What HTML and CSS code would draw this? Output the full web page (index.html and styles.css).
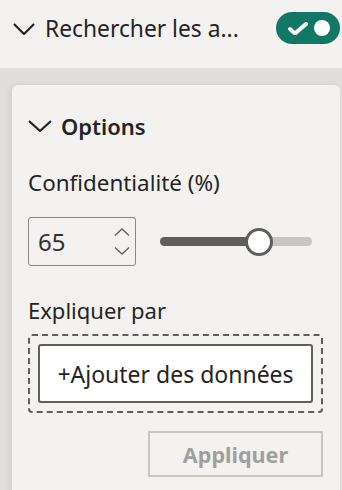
FILE: index.html
```html
<!DOCTYPE html>
<html lang="fr">
<head>
<meta charset="utf-8">
<link rel="stylesheet" href="styles.css">
</head>
<body>
<div class="header">
  <svg class="chev" viewBox="0 0 22 12" width="22" height="12"><path d="M1 1 L11 11 L21 1" fill="none" stroke="#252423" stroke-width="2.2"/></svg>
  <span class="title">Rechercher les a...</span>
  <div class="toggle">
    <svg class="check" viewBox="0 0 20 13" width="20" height="13"><path d="M2 7 L7 11.5 L18 2" fill="none" stroke="#fff" stroke-width="4" stroke-linecap="round" stroke-linejoin="round"/></svg>
    <span class="knob"></span>
  </div>
</div>
<div class="pane">
  <div class="card">
    <div class="section-head">
      <svg class="chev" viewBox="0 0 24 12" width="24" height="12"><path d="M1 1 L12 11 L23 1" fill="none" stroke="#252423" stroke-width="2.2"/></svg>
      <span>Options</span>
    </div>
    <div class="label">Confidentialité (%)</div>
    <div class="conf-row">
      <div class="spin">
        <span class="val">65</span>
        <div class="arrows">
          <svg viewBox="0 0 16 8" width="16" height="8"><path d="M1 7.5 L8 1 L15 7.5" fill="none" stroke="#605e5c" stroke-width="1.3"/></svg>
          <svg viewBox="0 0 16 8" width="16" height="8"><path d="M1 0.5 L8 7 L15 0.5" fill="none" stroke="#605e5c" stroke-width="1.3"/></svg>
        </div>
      </div>
      <div class="slider">
        <div class="track"><div class="fill" style="width:65%"></div></div>
        <div class="thumb" style="left:65%"></div>
      </div>
    </div>
    <div class="label label-explain">Expliquer par</div>
    <div class="drop">
      <button class="add">+Ajouter des données</button>
    </div>
    <div class="actions">
      <button class="apply" disabled>Appliquer</button>
    </div>
  </div>
</div>
</body>
</html>
```
FILE: styles.css
```css
html, body {
  margin: 0;
  padding: 0;
  height: 100%;
  overflow: hidden;
}
body {
  background: #e1dfdd;
  font-family: "Noto Sans", "Open Sans", sans-serif;
  color: #252423;
}
.header {
  background: #f3f2f1;
  height: 68px;
  box-sizing: border-box;
  padding: 12px 2px 0 13px;
  display: flex;
  align-items: flex-start;
}
.header .chev {
  margin-top: 11px;
  flex: none;
}
.title {
  margin-left: 10px;
  font-size: 22.8px;
  line-height: 34px;
  flex: 1;
  white-space: nowrap;
}
.toggle {
  width: 64px;
  height: 32px;
  border-radius: 16px;
  background: #117865;
  display: flex;
  align-items: center;
  padding: 0 10px 0 12px;
  box-sizing: border-box;
  justify-content: space-between;
  flex: none;
}
.check {
  display: block;
}
.knob {
  width: 16px;
  height: 16px;
  border-radius: 50%;
  background: #fff;
}
.pane {
  padding: 17px 2px 0 12px;
}
.card {
  background: #f3f2f1;
  border-radius: 6px;
  box-shadow: -2px 0 6px rgba(0,0,0,0.08);
  padding: 25px 17px 40px 16px;
  min-height: 420px;
}
.section-head {
  display: flex;
  align-items: center;
  height: 32px;
  font-size: 22px;
  font-weight: 600;
}
.section-head .chev {
  margin-right: 9px;
}
.label {
  margin-top: 26px;
  font-size: 22.4px;
  line-height: 30px;
}
.conf-row {
  margin-top: 19px;
  display: flex;
  align-items: center;
  gap: 24px;
}
.spin {
  width: 108px;
  height: 49px;
  box-sizing: border-box;
  border: 1.5px solid #8a8886;
  border-radius: 3px;
  background: #f3f2f1;
  display: flex;
  align-items: center;
  padding: 0 5px 0 9px;
}
.val {
  flex: 1;
  font-size: 24px;
  color: #323130;
}
.arrows {
  display: flex;
  flex-direction: column;
  gap: 11px;
}
.arrows svg {
  display: block;
}
.slider {
  position: relative;
  width: 152px;
  height: 28px;
  display: flex;
  align-items: center;
}
.track {
  width: 100%;
  height: 9px;
  border-radius: 4.5px;
  background: #c8c6c4;
  overflow: hidden;
}
.fill {
  height: 100%;
  background: #605e5c;
}
.thumb {
  position: absolute;
  top: 0;
  width: 28px;
  height: 28px;
  margin-left: -14px;
  box-sizing: border-box;
  border: 3px solid #605e5c;
  border-radius: 50%;
  background: #fff;
}
.label-explain {
  margin-top: 29px;
  font-size: 22px;
}
.drop {
  margin-top: 9px;
  border: 2px dashed #605e5c;
  border-radius: 4px;
  padding: 8px;
}
.add {
  display: block;
  width: 100%;
  height: 59px;
  box-sizing: border-box;
  border: 2px solid #605e5c;
  border-radius: 3px;
  background: #fff;
  font-family: inherit;
  font-size: 23px;
  color: #252423;
  padding: 0;
}
.actions {
  margin-top: 18px;
  display: flex;
  justify-content: flex-end;
}
.apply {
  width: 175px;
  height: 46px;
  box-sizing: border-box;
  border: 2px solid #c8c6c4;
  border-radius: 0;
  background: transparent;
  font-family: inherit;
  font-size: 21.6px;
  font-weight: 700;
  color: #a19f9d;
  padding: 0;
}
```
